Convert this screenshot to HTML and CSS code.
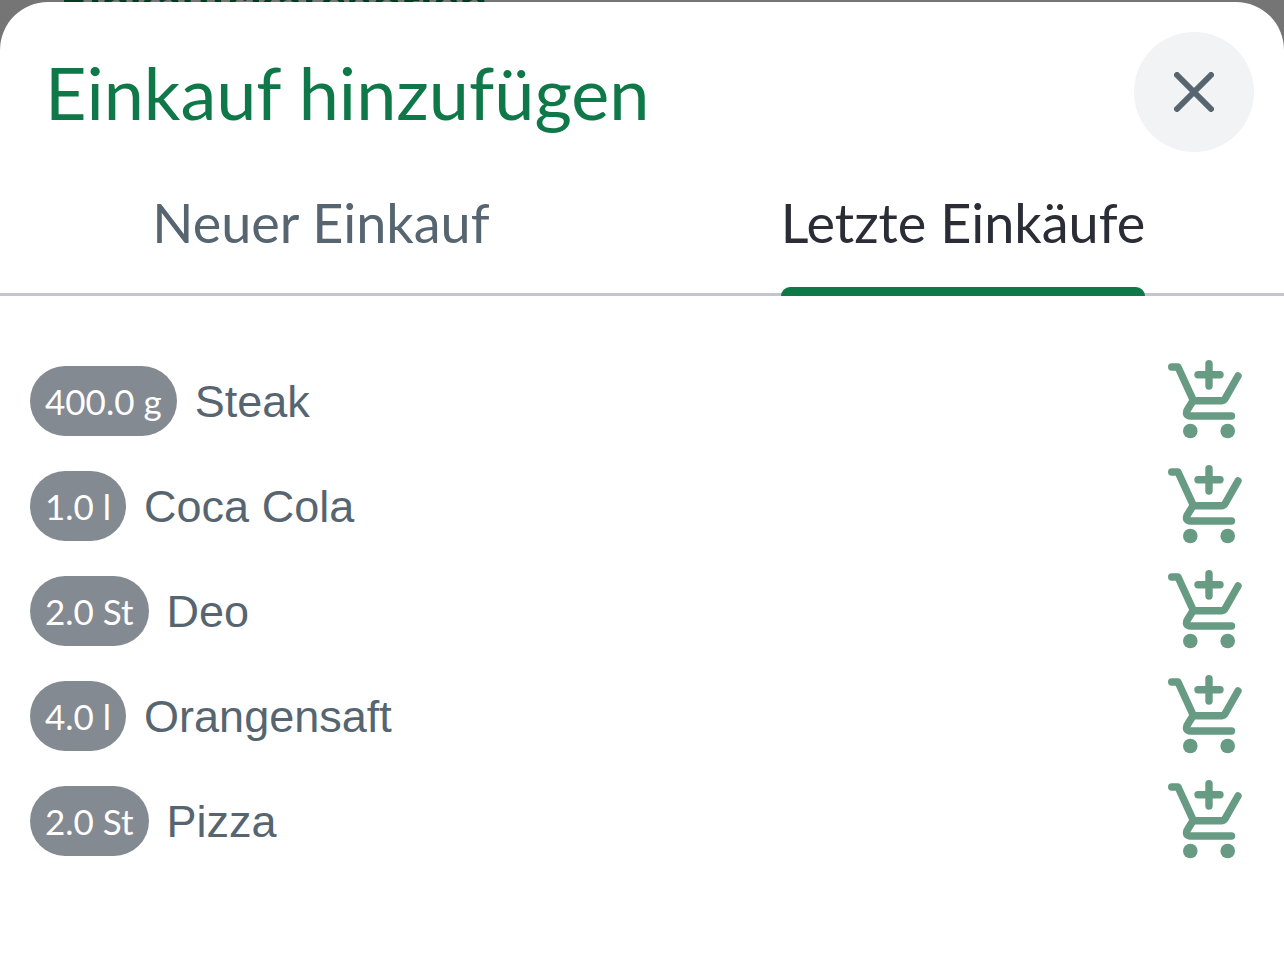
FILE: index.html
```
<!DOCTYPE html>
<html lang="de">
<head>
<meta charset="utf-8">
<meta name="viewport" content="width=device-width, initial-scale=1">
<title>Einkauf hinzufügen</title>
<link rel="stylesheet" href="styles.css">
</head>
<body>
<svg class="sprite" aria-hidden="true">
  <symbol id="cart" viewBox="0 0 74 80">
    <g fill="none" stroke="currentColor" stroke-width="7.400" stroke-linecap="round" stroke-linejoin="round">
      <path d="M3.700 7H10L25.500 40.700H54Q56 40.700 57.200 38.500L70 16"/>
      <path d="M24.500 41.500L19 50.500Q17 56 22.500 56H63.500"/>
      <path d="M41 3.700V26M30 14.700H52"/>
    </g>
    <circle cx="22.300" cy="71" r="7.300" fill="currentColor"/>
    <circle cx="59.700" cy="71" r="7.300" fill="currentColor"/>
  </symbol>
</svg>
<div class="backdrop" aria-hidden="true">Einkaufskategorien</div>
<main class="sheet">
  <header class="header">
    <h1 class="title">Einkauf hinzufügen</h1>
    <button class="close" type="button" aria-label="Schließen">
      <svg class="close-icon" viewBox="0 0 40 40" aria-hidden="true"><path d="M3 3L37 37M37 3L3 37" fill="none" stroke="currentColor" stroke-width="6" stroke-linecap="round"/></svg>
    </button>
  </header>
  <div class="tabs" role="tablist">
    <button class="tab" type="button" role="tab" aria-selected="false"><span class="tab-label">Neuer Einkauf</span></button>
    <button class="tab tab-active" type="button" role="tab" aria-selected="true"><span class="tab-label">Letzte Einkäufe</span></button>
  </div>
  <ul class="list">
    <li class="row"><span class="amount">400.0 g</span><span class="name">Steak</span><button class="add" type="button" aria-label="Steak hinzufügen"><svg class="cart"><use href="#cart"/></svg></button></li>
    <li class="row"><span class="amount">1.0 l</span><span class="name">Coca Cola</span><button class="add" type="button" aria-label="Coca Cola hinzufügen"><svg class="cart"><use href="#cart"/></svg></button></li>
    <li class="row"><span class="amount">2.0 St</span><span class="name">Deo</span><button class="add" type="button" aria-label="Deo hinzufügen"><svg class="cart"><use href="#cart"/></svg></button></li>
    <li class="row"><span class="amount">4.0 l</span><span class="name">Orangensaft</span><button class="add" type="button" aria-label="Orangensaft hinzufügen"><svg class="cart"><use href="#cart"/></svg></button></li>
    <li class="row"><span class="amount">2.0 St</span><span class="name">Pizza</span><button class="add" type="button" aria-label="Pizza hinzufügen"><svg class="cart"><use href="#cart"/></svg></button></li>
  </ul>
</main>
</body>
</html>
```
FILE: styles.css
```
* { box-sizing: border-box; }
body {
  margin: 0;
  padding-top: 2px;
  min-height: 100vh;
  display: flex;
  background: #757575;
  font-family: Lato, sans-serif;
  overflow: hidden;
}
button {
  margin: 0;
  padding: 0;
  border: 0;
  background: none;
  font: inherit;
  color: inherit;
  cursor: pointer;
}
.sprite { position: absolute; width: 0; height: 0; }
.backdrop {
  position: absolute;
  top: -28px;
  left: 60px;
  font-size: 50px;
  line-height: 60px;
  font-weight: 700;
  color: #003d1e;
}
.sheet {
  position: relative;
  flex: 1;
  background: #fff;
  border-radius: 48px 48px 0 0;
}
.header {
  display: flex;
  justify-content: space-between;
  align-items: center;
  padding: 30px 30px 0 45px;
}
.title {
  margin: 0;
  font-size: 72px;
  line-height: 84px;
  font-weight: 400;
  color: #0f7848;
}
.close {
  display: grid;
  place-items: center;
  width: 120px;
  height: 120px;
  border-radius: 50%;
  background: #f2f3f5;
  color: #566570;
}
.close-icon { width: 40px; height: 40px; }
.tabs {
  display: grid;
  grid-template-columns: 1fr 1fr;
  height: 144px;
  border-bottom: 3px solid #c6c4d0;
}
.tab {
  display: flex;
  justify-content: center;
  height: 144px;
  font-size: 54px;
  line-height: 64px;
  color: #566570;
}
.tab-label {
  position: relative;
  height: 144px;
  padding-top: 39px;
}
.tab-active { color: #2a2d35; }
.tab-active .tab-label::after {
  content: "";
  position: absolute;
  left: 0;
  right: 0;
  bottom: 0;
  height: 9px;
  border-radius: 9px 9px 0 0;
  background: #0f7848;
}
.list {
  list-style: none;
  margin: 0;
  padding: 52px 30px;
}
.row {
  display: flex;
  align-items: center;
  gap: 18px;
  height: 105px;
}
.amount {
  height: 70px;
  padding: 0 15px;
  border-radius: 35px;
  background: #848a92;
  color: #fff;
  font-size: 35px;
  line-height: 70px;
  white-space: nowrap;
}
.name {
  flex: 1;
  font-family: "Liberation Sans", sans-serif;
  font-size: 45px;
  line-height: 60px;
  padding-top: 2px;
  color: #566570;
}
.add {
  display: grid;
  place-items: center;
  width: 98px;
  height: 98px;
  padding-bottom: 2px;
  color: #689b83;
}
.cart { width: 74px; height: 80px; }
```
